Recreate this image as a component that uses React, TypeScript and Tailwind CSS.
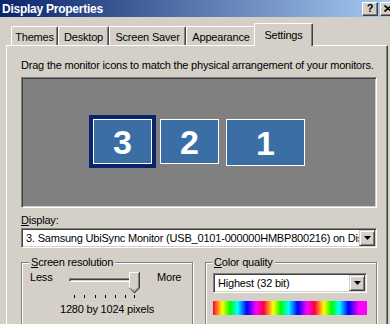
import React from "react";

function Arrow() {
  return (
    <svg width="7" height="4" viewBox="0 0 7 4">
      <polygon points="0,0 7,0 3.5,4" fill="#000" />
    </svg>
  );
}

function DropButton() {
  return (
    <div className="flex h-full w-[16px] items-center justify-center border border-t-[#d4d0c8] border-l-[#d4d0c8] border-r-[#404040] border-b-[#404040] bg-[#d4d0c8] shadow-[inset_1px_1px_0_#ffffff,inset_-1px_-1px_0_#808080]">
      <Arrow />
    </div>
  );
}

function Thumb() {
  return (
    <svg width="11" height="22" viewBox="0 0 11 22">
      <polygon points="0,0 11,0 11,16 5.5,21.5 0,16" fill="#404040" />
      <polygon points="0,0 10,0 10,15.6 5.5,20 0,15.6" fill="#ffffff" />
      <polygon points="1,1 10,1 10,15.6 5.5,20 1,15.6" fill="#808080" />
      <polygon points="1,1 9,1 9,15.2 5.5,18.8 1,15.2" fill="#d4d0c8" />
    </svg>
  );
}

const tabs = [
  { label: "Themes", cls: "w-[47px]" },
  { label: "Desktop", cls: "w-[51px]" },
  { label: "Screen Saver", cls: "w-[77px]" },
  { label: "Appearance", cls: "w-[70px]" },
];

export default function App() {
  return (
    <div className="relative h-[324px] w-[390px] overflow-hidden bg-[#d4d0c8] font-['Liberation_Sans',Arial,sans-serif] text-[11px] leading-[13px] tracking-[-0.2px] text-black">
      {/* Title bar */}
      <div className="flex h-[17px] items-center justify-between bg-[linear-gradient(to_right,#0a246a,#a6caf0)] pl-[2px]">
        <span className="text-[12px] font-bold leading-[14px] tracking-[-0.25px] text-white">
          Display Properties
        </span>
        <div className="mr-[-6px] flex gap-[2px]">
          <div className="flex h-[14px] w-[16px] items-center justify-center border border-t-white border-l-white border-r-[#404040] border-b-[#404040] bg-[#d4d0c8] shadow-[inset_-1px_-1px_0_#808080] text-[11px] font-bold leading-none">
            ?
          </div>
          <div className="flex h-[14px] w-[16px] items-center justify-center border border-t-white border-l-white border-r-[#404040] border-b-[#404040] bg-[#d4d0c8] shadow-[inset_-1px_-1px_0_#808080]">
            <svg width="8" height="7" viewBox="0 0 8 7">
              <path d="M0.5 0.5 L7.5 6.5 M7.5 0.5 L0.5 6.5" stroke="#000" strokeWidth="1.6" />
            </svg>
          </div>
        </div>
      </div>

      {/* Body */}
      <div className="pl-[6px] pr-[2px] pt-[6px]">
        {/* Tabs */}
        <div className="flex h-[22px] items-end pl-[5px]">
          {tabs.map((t) => (
            <div
              key={t.label}
              className={`${t.cls} h-[19px] rounded-t-[2px] border-t border-l border-r border-t-white border-l-white border-r-[#404040] pt-[4px] text-center shadow-[inset_-1px_0_0_#808080]`}
            >
              {t.label}
            </div>
          ))}
          <div className="relative z-10 -mx-[2px] mb-[-1px] h-[23px] w-[59px] rounded-t-[2px] border-t border-l border-r border-t-white border-l-white border-r-[#404040] bg-[#d4d0c8] pt-[5px] text-center shadow-[inset_-1px_0_0_#808080]">
            Settings
          </div>
        </div>

        {/* Panel */}
        <div className="h-[300px] border-t border-l border-r border-t-white border-l-white border-r-[#404040] pl-[14px] pt-[13px] shadow-[inset_-1px_0_0_#808080]">
          <div>Drag the monitor icons to match the physical arrangement of your monitors.</div>

          {/* Monitor area */}
          <div className="relative mt-[5px] h-[131px] w-[356px] border border-t-[#808080] border-l-[#808080] border-r-white border-b-white bg-[#808080] shadow-[inset_1px_1px_0_#404040,inset_-1px_-1px_0_#d4d0c8]">
            <div className="absolute left-[67px] top-[37px] h-[53px] w-[67px] bg-[#0a246a] p-[4px]">
              <div className="flex h-full w-full items-center justify-center border border-white bg-[#3a6ea5] text-[34px] font-bold leading-none tracking-normal text-white">
                3
              </div>
            </div>
            <div className="absolute left-[138px] top-[41px] flex h-[45px] w-[59px] items-center justify-center border border-white bg-[#3a6ea5] text-[34px] font-bold leading-none tracking-normal text-white">
              2
            </div>
            <div className="absolute left-[204px] top-[41px] flex h-[47px] w-[79px] items-center justify-center border border-white bg-[#3a6ea5] text-[34px] font-bold leading-none tracking-normal text-white">
              1
            </div>
          </div>

          {/* Display */}
          <div className="mt-[6px]">
            <span className="underline underline-offset-[1px]">D</span>isplay:
          </div>
          <div className="mt-[1px] flex h-[20px] w-[356px] items-center border border-t-[#808080] border-l-[#808080] border-r-white border-b-white bg-white p-[1px] shadow-[inset_1px_1px_0_#404040,inset_-1px_-1px_0_#d4d0c8]">
            <div className="flex-1 overflow-hidden whitespace-nowrap pl-[3px]">
              3. Samsung UbiSync Monitor (USB_0101-000000HMBP800216) on Display adapter
            </div>
            <DropButton />
          </div>

          {/* Group boxes */}
          <div className="mt-[14px] flex gap-[12px]">
            <div className="relative h-[80px] w-[172px] border border-[#808080] shadow-[inset_1px_1px_0_#ffffff,1px_1px_0_#ffffff]">
              <div className="absolute left-[7px] top-[-7px] bg-[#d4d0c8] px-[2px]">
                <span className="underline underline-offset-[1px]">S</span>creen resolution
              </div>
              <div className="flex pl-[8px] pt-[8px]">
                <div className="w-[34px]">Less</div>
                <div className="relative h-[30px] w-[80px]">
                  <div className="absolute left-[5px] top-[7px] h-[4px] w-[70px] border border-t-[#808080] border-l-[#808080] border-r-white border-b-white shadow-[inset_1px_1px_0_#404040]" />
                  <div className="absolute left-[65px] top-[1px]">
                    <Thumb />
                  </div>
                  <div className="absolute left-[10px] top-[24px] h-[3px] w-px bg-black" />
                  <div className="absolute left-[20px] top-[24px] h-[3px] w-px bg-black" />
                  <div className="absolute left-[31px] top-[24px] h-[3px] w-px bg-black" />
                  <div className="absolute left-[41px] top-[24px] h-[3px] w-px bg-black" />
                  <div className="absolute left-[51px] top-[24px] h-[3px] w-px bg-black" />
                  <div className="absolute left-[61px] top-[24px] h-[3px] w-px bg-black" />
                  <div className="absolute left-[70px] top-[24px] h-[3px] w-px bg-black" />
                </div>
                <div className="ml-[13px]">More</div>
              </div>
              <div className="mt-[2px] text-center">1280 by 1024 pixels</div>
            </div>

            <div className="relative h-[80px] w-[172px] border border-[#808080] shadow-[inset_1px_1px_0_#ffffff,1px_1px_0_#ffffff]">
              <div className="absolute left-[6px] top-[-7px] bg-[#d4d0c8] px-[2px]">
                <span className="underline underline-offset-[1px]">C</span>olor quality
              </div>
              <div className="pl-[7px] pt-[10px]">
                <div className="flex h-[20px] w-[154px] items-center border border-t-[#808080] border-l-[#808080] border-r-white border-b-white bg-white p-[1px] shadow-[inset_1px_1px_0_#404040,inset_-1px_-1px_0_#d4d0c8]">
                  <div className="flex-1 overflow-hidden whitespace-nowrap pl-[3px]">Highest (32 bit)</div>
                  <DropButton />
                </div>
                <div className="mt-[8px] h-[14px] w-[154px] bg-[linear-gradient(to_right,#ff0040,#ffff00_6%,#00ff00_11%,#00ffff_16%,#0000ff_22%,#ff00ff_28%,#ff0040_33%,#ffff00_39%,#00ff00_44%,#00ffff_49%,#0000ff_55%,#ff00ff_61%,#ff0040_66%,#ffff00_72%,#00ff00_77%,#00ffff_82%,#0000ff_88%,#ff00ff_95%,#ff00ff)]" />
              </div>
            </div>
          </div>
        </div>
      </div>
    </div>
  );
}
